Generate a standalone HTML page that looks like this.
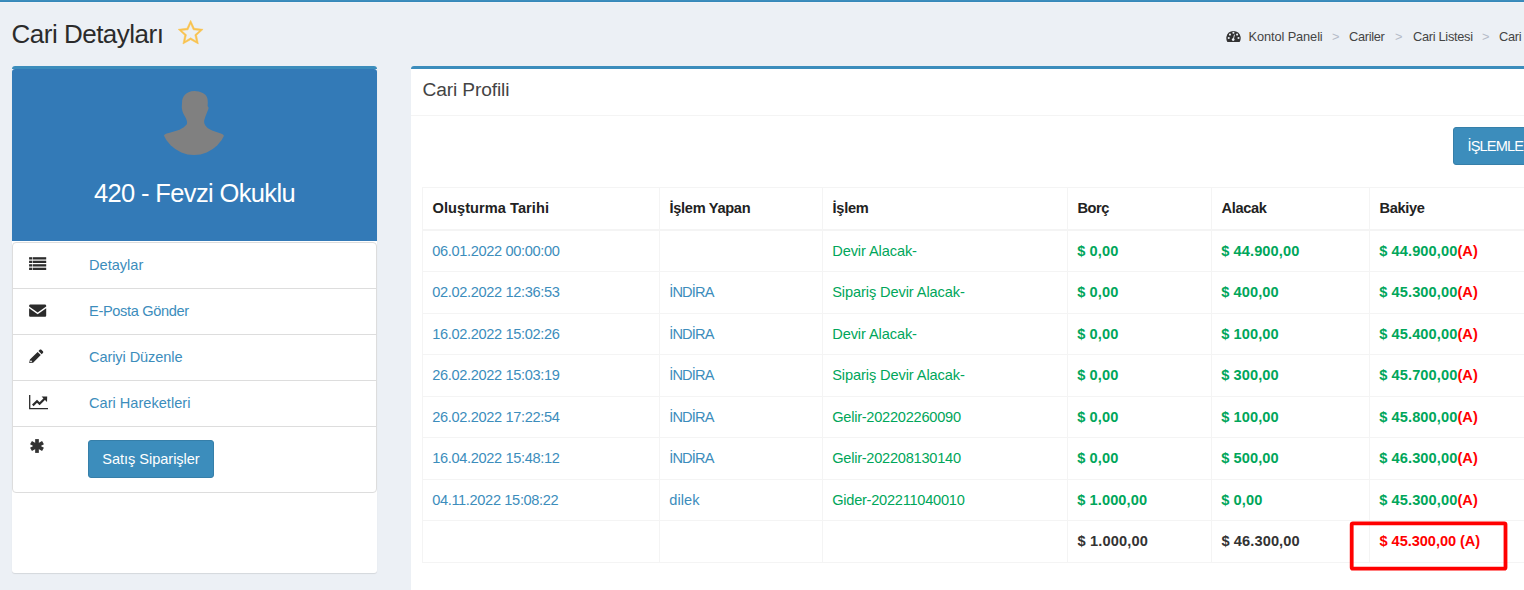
<!DOCTYPE html>
<html lang="tr">
<head>
<meta charset="utf-8">
<title>Cari Detayları</title>
<style>
*{box-sizing:border-box;margin:0;padding:0}
html,body{width:1524px;height:590px;overflow:hidden;background:#ecf0f5}
body{font-family:"Liberation Sans",sans-serif;font-size:14.6px;color:#333;position:relative}
.abs{position:absolute}
.topbar{left:0;top:0;width:1524px;height:2px;background:#3c8dbc}
.t{position:absolute;white-space:nowrap;line-height:20px;letter-spacing:-0.35px}
.b{font-weight:bold}
.th{font-weight:bold;color:#222}
.lnk{color:#3c8dbc}
.grn{color:#00a65a}
.red{color:#ff0000}
.vb{position:absolute;width:1px;background:#f4f4f4}
.hb{position:absolute;left:422px;width:1102px;height:1px;background:#f4f4f4}
.hb.h2{height:2px}
h1{position:absolute;left:11.5px;top:17px;font-size:26px;font-weight:normal;line-height:34px;color:#2b2b2b;letter-spacing:-0.5px;white-space:nowrap}
.lbox{left:12px;top:66px;width:365px;height:507px;background:#fff;border-radius:3px;box-shadow:0 1px 1px rgba(0,0,0,.1)}
.lbox .bt{left:0;top:0;width:365px;height:3px;background:#3c8dbc;border-radius:3px 3px 0 0}
.lbox .blue{left:0;top:3px;width:365px;height:172px;background:#337ab7;border-radius:3px 3px 0 0}
.name{left:0;width:365px;top:111px;text-align:center;color:#fff;font-size:25.5px;line-height:32px;letter-spacing:-0.65px;white-space:nowrap}
.lg{left:0;top:176px;width:365px;height:251px;border:1px solid #ddd;border-radius:4px;background:#fff}
.lg .sep{left:0;width:363px;height:1px;background:#ddd}
.lg .it{left:76px;color:#3c8dbc;white-space:nowrap;line-height:20px;letter-spacing:-0.35px}
.btn{background:#3c8dbc;border:1px solid #367fa9;border-radius:3px;color:#fff;text-align:center;white-space:nowrap;letter-spacing:-0.35px}
.rbox{left:411px;top:66px;width:1200px;height:540px;background:#fff;border-top:3px solid #3c8dbc;border-radius:3px 0 0 0}
.rbox .hd{left:0;top:0;width:1200px;height:47px;border-bottom:1px solid #f4f4f4}
.rtitle{left:422.5px;top:76.3px;font-size:19.2px;line-height:28px;color:#444;letter-spacing:-0.14px;white-space:nowrap}
.bc{top:26.7px;font-size:12.8px;line-height:20px;color:#444;white-space:nowrap;letter-spacing:-0.3px}
.bc.s{color:#b5bbc8}
.redbox{left:1350px;top:521px;width:157.5px;height:49.5px;border:4px solid #ff0000;border-radius:3px}
</style>
</head>
<body>
<div class="abs topbar"></div><div class="abs" style="left:0;top:1px;width:1524px;height:1px;background:#3688ba"></div><div class="abs" style="left:0;top:2px;width:1524px;height:1px;background:#f0f3f7"></div>
<h1>Cari Detayları</h1>
<svg class="abs" style="left:176px;top:18px" width="30" height="30" viewBox="0 0 30 30"><path d="M14.64 2.30 L18.34 10.30 L27.10 11.35 L20.63 17.35 L22.34 26.00 L14.64 21.70 L6.94 26.00 L8.65 17.35 L2.18 11.35 L10.94 10.30 Z M12.05 11.84 L5.51 12.43 L10.46 16.76 L9.00 23.17 L14.64 19.80 L20.28 23.17 L18.82 16.76 L23.77 12.43 L17.23 11.84 L14.64 5.80 Z" fill="#f9c24e" fill-rule="evenodd" stroke="#f9c24e" stroke-width="0.5" stroke-linejoin="round"/></svg>

<!-- breadcrumb -->
<svg class="abs" style="left:1226px;top:30px" width="16" height="13" viewBox="0 0 16 13"><path d="M1.4 11.9 A7.2 7.2 0 1 1 13.6 11.9 Z" fill="#333"/><g fill="#ecf0f5"><circle cx="2.75" cy="8.05" r="1.05"/><circle cx="3.97" cy="4.6" r="1.05"/><circle cx="7.43" cy="2.8" r="1.05"/><circle cx="11.09" cy="4.6" r="1.05"/><circle cx="12.5" cy="8.05" r="1.05"/><circle cx="7.2" cy="9.6" r="1.35"/></g><path d="M7.2 9.6 L8.45 5" stroke="#ecf0f5" stroke-width="0.9" stroke-linecap="round"/></svg>
<span class="abs bc" style="left:1248.5px;letter-spacing:-0.1px">Kontol Paneli</span>
<span class="abs bc s" style="left:1332px">&gt;</span>
<span class="abs bc" style="left:1349px">Cariler</span>
<span class="abs bc s" style="left:1395px">&gt;</span>
<span class="abs bc" style="left:1413px">Cari Listesi</span>
<span class="abs bc s" style="left:1482px">&gt;</span>
<span class="abs bc" style="left:1499px">Cari Detayları</span>

<!-- left box -->
<div class="abs lbox">
  <div class="abs bt"></div>
  <div class="abs blue"></div>
  <svg class="abs" style="left:149.2px;top:23px" width="66" height="66" viewBox="0 0 66 66">
    <defs><clipPath id="cc"><circle cx="33" cy="33" r="33"/></clipPath></defs>
    <g clip-path="url(#cc)" fill="#808080">
      <path d="M33.4 2 C29 2 25.5 3.8 23.7 6 C21.8 8.2 21 10.5 21.1 13 C21 15.5 20.6 17.5 20.9 19.5 C21.3 22 22 24 23.1 25.9 C24.5 28.3 25.6 30.3 26 32.4 C26.2 33.6 26.1 34.8 25.6 35.6 C23.8 37.6 21.5 39.6 18.6 40.7 C14.5 42.2 9.5 43.3 5.7 44.6 C4.3 45.1 3.4 45.7 3 46.6 L0 50 L0 66 L66 66 L66 50 L63.1 47.2 C62.6 46 61.5 45.2 59.8 44.6 C56 43.3 52 42.2 48.2 40.1 C46 38.9 44 36.6 43.3 34.3 C43 33.2 43 32.2 43.3 31.1 C43.8 28.8 44.8 26.8 45.6 24.6 C46.2 23 47 21.3 47.5 19.5 C47.7 18.6 47.2 17.8 46.6 16.9 C46.9 14.3 46.9 11.6 46.3 9.2 C45.6 6.9 44 5 41.75 4 C39.3 2.7 36.5 2 33.4 2 Z"/>
    </g>
  </svg>
  <div class="abs name">420 - Fevzi Okuklu</div>
  <div class="abs lg">
    <div class="abs sep" style="top:45px"></div>
    <div class="abs sep" style="top:91px"></div>
    <div class="abs sep" style="top:137px"></div>
    <div class="abs sep" style="top:183px"></div>
    <span class="abs it" style="top:12px;letter-spacing:0">Detaylar</span>
    <span class="abs it" style="top:58px">E-Posta Gönder</span>
    <span class="abs it" style="top:104px;letter-spacing:-0.1px">Cariyi Düzenle</span>
    <span class="abs it" style="top:150px;letter-spacing:0">Cari Hareketleri</span>
    <!-- icons -->
    <svg class="abs" style="left:16px;top:14px" width="18" height="14" viewBox="0 0 18 14"><g fill="#2b2b2b"><rect x="0.1" y="0.2" width="2.9" height="2.3"/><rect x="3.6" y="0.2" width="13.6" height="2.3"/><rect x="0.1" y="3.7" width="2.9" height="2.3"/><rect x="3.6" y="3.7" width="13.6" height="2.3"/><rect x="0.1" y="7.2" width="2.9" height="2.3"/><rect x="3.6" y="7.2" width="13.6" height="2.3"/><rect x="0.1" y="10.7" width="2.9" height="2.3"/><rect x="3.6" y="10.7" width="13.6" height="2.3"/></g></svg>
    <svg class="abs" style="left:16px;top:61px" width="18" height="14" viewBox="0 0 18 14"><path d="M0.1 1.9 C0.1 1.2 0.7 0.6 1.4 0.6 L15.9 0.6 C16.6 0.6 17.2 1.2 17.2 1.9 L17.2 2.5 L8.65 8.6 L0.1 2.5 Z M0.1 4.3 L8.65 10.3 L17.2 4.3 L17.2 11.5 C17.2 12.2 16.6 12.8 15.9 12.8 L1.4 12.8 C0.7 12.8 0.1 12.2 0.1 11.5 Z" fill="#2b2b2b"/></svg>
    <svg class="abs" style="left:16px;top:106px" width="16" height="16" viewBox="0 0 16 16"><path d="M0.2 14 L0.9 10.6 L8.6 2.9 L11.8 6.1 L4.1 13.8 Z M9.5 2 L10.7 0.8 C11.2 0.3 11.9 0.3 12.4 0.8 L13.9 2.3 C14.4 2.8 14.4 3.5 13.9 4 L12.7 5.2 Z" fill="#2b2b2b"/><circle cx="2" cy="12.3" r="0.9" fill="#fff"/></svg>
    <svg class="abs" style="left:16px;top:151px" width="20" height="16" viewBox="0 0 20 16"><path d="M0.7 1 L0.7 14.6 L19 14.6" fill="none" stroke="#2b2b2b" stroke-width="1.3"/><path d="M3.8 11.4 L8 7.2 L10.6 9.8 L15.6 4.8" fill="none" stroke="#2b2b2b" stroke-width="2.2"/><path d="M12.6 2.6 L18.2 2.4 L18 8 Z" fill="#2b2b2b"/></svg>
    <svg class="abs" style="left:16px;top:194.6px" width="16" height="16" viewBox="0 0 16 16"><g stroke="#333" stroke-width="3.7" stroke-linecap="butt"><path d="M8 1.1 L8 14.9"/><path d="M2 4.55 L14 11.45"/><path d="M2 11.45 L14 4.55"/></g></svg>
    <div class="abs btn" style="left:75px;top:197px;width:126px;height:38px;line-height:36px;letter-spacing:-0.05px">Satış Siparişler</div>
  </div>
</div>

<!-- right box -->
<div class="abs rbox"><div class="abs hd"></div></div>
<span class="abs rtitle">Cari Profili</span>
<div class="abs btn" style="left:1453px;top:127px;width:120px;height:38px;line-height:36px;text-align:left;padding-left:13.5px;letter-spacing:-0.85px;line-height:36.6px">İŞLEMLER</div>

<div class="vb" style="left:422.0px;top:187.5px;height:375.5px"></div>
<div class="vb" style="left:659.0px;top:187.5px;height:375.5px"></div>
<div class="vb" style="left:822.0px;top:187.5px;height:375.5px"></div>
<div class="vb" style="left:1067.0px;top:187.5px;height:375.5px"></div>
<div class="vb" style="left:1211.0px;top:187.5px;height:375.5px"></div>
<div class="vb" style="left:1369.0px;top:187.5px;height:375.5px"></div>
<div class="hb" style="top:187.0px"></div>
<div class="hb h2" style="top:229px"></div>
<div class="hb" style="top:271px"></div>
<div class="hb" style="top:313px"></div>
<div class="hb" style="top:354px"></div>
<div class="hb" style="top:396px"></div>
<div class="hb" style="top:437px"></div>
<div class="hb" style="top:479px"></div>
<div class="hb" style="top:520px"></div>
<div class="hb" style="top:562px"></div>
<span class="t th" style="left:432.5px;top:198.0px;letter-spacing:0.05px">Oluşturma Tarihi</span>
<span class="t th" style="left:669.5px;top:198.0px;letter-spacing:-0.3px">İşlem Yapan</span>
<span class="t th" style="left:832.5px;top:198.0px;letter-spacing:-0.25px">İşlem</span>
<span class="t th" style="left:1077.5px;top:198.0px;letter-spacing:-0.45px">Borç</span>
<span class="t th" style="left:1221.5px;top:198.0px;letter-spacing:-0.35px">Alacak</span>
<span class="t th" style="left:1379.5px;top:198.0px;letter-spacing:-0.35px">Bakiye</span>
<span class="t lnk" style="left:432.2px;top:240.7px;letter-spacing:-0.35px">06.01.2022 00:00:00</span>
<span class="t grn" style="left:832.2px;top:240.7px;letter-spacing:-0.1px">Devir Alacak-</span>
<span class="t grn b" style="left:1077.2px;top:240.7px;letter-spacing:0.1px">$ 0,00</span>
<span class="t grn b" style="left:1221.2px;top:240.7px;letter-spacing:0.1px">$ 44.900,00</span>
<span class="t grn b" style="left:1379.2px;top:240.7px;letter-spacing:0.1px">$ 44.900,00<span class="red">(A)</span></span>
<span class="t lnk" style="left:432.2px;top:281.7px;letter-spacing:-0.35px">02.02.2022 12:36:53</span>
<span class="t lnk" style="left:669.2px;top:281.7px;letter-spacing:-0.85px">İNDİRA</span>
<span class="t grn" style="left:832.2px;top:281.7px;letter-spacing:-0.1px">Sipariş Devir Alacak-</span>
<span class="t grn b" style="left:1077.2px;top:281.7px;letter-spacing:0.1px">$ 0,00</span>
<span class="t grn b" style="left:1221.2px;top:281.7px;letter-spacing:0.1px">$ 400,00</span>
<span class="t grn b" style="left:1379.2px;top:281.7px;letter-spacing:0.1px">$ 45.300,00<span class="red">(A)</span></span>
<span class="t lnk" style="left:432.2px;top:323.7px;letter-spacing:-0.35px">16.02.2022 15:02:26</span>
<span class="t lnk" style="left:669.2px;top:323.7px;letter-spacing:-0.85px">İNDİRA</span>
<span class="t grn" style="left:832.2px;top:323.7px;letter-spacing:-0.1px">Devir Alacak-</span>
<span class="t grn b" style="left:1077.2px;top:323.7px;letter-spacing:0.1px">$ 0,00</span>
<span class="t grn b" style="left:1221.2px;top:323.7px;letter-spacing:0.1px">$ 100,00</span>
<span class="t grn b" style="left:1379.2px;top:323.7px;letter-spacing:0.1px">$ 45.400,00<span class="red">(A)</span></span>
<span class="t lnk" style="left:432.2px;top:364.7px;letter-spacing:-0.35px">26.02.2022 15:03:19</span>
<span class="t lnk" style="left:669.2px;top:364.7px;letter-spacing:-0.85px">İNDİRA</span>
<span class="t grn" style="left:832.2px;top:364.7px;letter-spacing:-0.1px">Sipariş Devir Alacak-</span>
<span class="t grn b" style="left:1077.2px;top:364.7px;letter-spacing:0.1px">$ 0,00</span>
<span class="t grn b" style="left:1221.2px;top:364.7px;letter-spacing:0.1px">$ 300,00</span>
<span class="t grn b" style="left:1379.2px;top:364.7px;letter-spacing:0.1px">$ 45.700,00<span class="red">(A)</span></span>
<span class="t lnk" style="left:432.2px;top:406.7px;letter-spacing:-0.35px">26.02.2022 17:22:54</span>
<span class="t lnk" style="left:669.2px;top:406.7px;letter-spacing:-0.85px">İNDİRA</span>
<span class="t grn" style="left:832.2px;top:406.7px;letter-spacing:-0.25px">Gelir-202202260090</span>
<span class="t grn b" style="left:1077.2px;top:406.7px;letter-spacing:0.1px">$ 0,00</span>
<span class="t grn b" style="left:1221.2px;top:406.7px;letter-spacing:0.1px">$ 100,00</span>
<span class="t grn b" style="left:1379.2px;top:406.7px;letter-spacing:0.1px">$ 45.800,00<span class="red">(A)</span></span>
<span class="t lnk" style="left:432.2px;top:447.7px;letter-spacing:-0.35px">16.04.2022 15:48:12</span>
<span class="t lnk" style="left:669.2px;top:447.7px;letter-spacing:-0.85px">İNDİRA</span>
<span class="t grn" style="left:832.2px;top:447.7px;letter-spacing:-0.25px">Gelir-202208130140</span>
<span class="t grn b" style="left:1077.2px;top:447.7px;letter-spacing:0.1px">$ 0,00</span>
<span class="t grn b" style="left:1221.2px;top:447.7px;letter-spacing:0.1px">$ 500,00</span>
<span class="t grn b" style="left:1379.2px;top:447.7px;letter-spacing:0.1px">$ 46.300,00<span class="red">(A)</span></span>
<span class="t lnk" style="left:432.2px;top:489.7px;letter-spacing:-0.35px">04.11.2022 15:08:22</span>
<span class="t lnk" style="left:669.2px;top:489.7px;letter-spacing:0.1px">dilek</span>
<span class="t grn" style="left:832.2px;top:489.7px;letter-spacing:-0.25px">Gider-202211040010</span>
<span class="t grn b" style="left:1077.2px;top:489.7px;letter-spacing:0.1px">$ 1.000,00</span>
<span class="t grn b" style="left:1221.2px;top:489.7px;letter-spacing:0.1px">$ 0,00</span>
<span class="t grn b" style="left:1379.2px;top:489.7px;letter-spacing:0.1px">$ 45.300,00<span class="red">(A)</span></span>
<span class="t b" style="left:1077.5px;top:530.7px;letter-spacing:0.15px">$ 1.000,00</span>
<span class="t b" style="left:1221.5px;top:530.7px;letter-spacing:0.1px">$ 46.300,00</span>
<span class="t b red" style="left:1379.5px;top:530.7px;letter-spacing:-0.05px">$ 45.300,00 (A)</span>

<svg class="abs" style="left:1340px;top:512px" width="180" height="70" viewBox="0 0 180 70"><rect x="11.7" y="11.3" width="153.8" height="45.3" rx="1.2" fill="none" stroke="#ff0000" stroke-width="3.8"/></svg>
</body>
</html>
